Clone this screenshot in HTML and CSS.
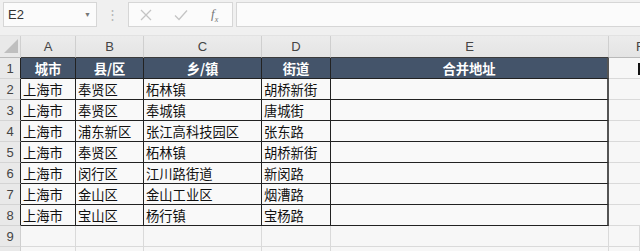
FILE: index.html
```html
<!DOCTYPE html>
<html lang="zh">
<head>
<meta charset="utf-8">
<link rel="stylesheet" href="styles.css">
</head>
<body>
<div class="app">
  <div class="toolbar">
    <div class="namebox"><span class="ref">E2</span><span class="drop">▼</span></div>
    <div class="dots">⋮</div>
    <div class="btns">
      <svg class="ico x" width="12" height="12" viewBox="0 0 12 12"><path d="M1 1L11 11M11 1L1 11" stroke="#c4c4c4" stroke-width="1.3" fill="none"/></svg>
      <svg class="ico ok" width="14" height="12" viewBox="0 0 14 12"><path d="M1 6.5L5 10.5L13 1.5" stroke="#c4c4c4" stroke-width="1.3" fill="none"/></svg>
      <span class="fx">f<sub>x</sub></span>
    </div>
    <div class="formula"></div>
  </div>
  <div class="grid">
    <div class="c corner"><svg width="14" height="14" viewBox="0 0 14 14"><path d="M14 0L14 14L0 14Z" fill="#bfbfbf"/></svg></div>
    <div class="c colh tb">A</div>
    <div class="c colh tb">B</div>
    <div class="c colh tb">C</div>
    <div class="c colh tb">D</div>
    <div class="c colh tb">E</div>
    <div class="c colh f"><span class="flabel">F</span></div>

    <div class="c rowh in">1</div>
    <div class="c hd">城市</div>
    <div class="c hd">县/区</div>
    <div class="c hd">乡/镇</div>
    <div class="c hd">街道</div>
    <div class="c hd last">合并地址</div>
    <div class="c fc"><span class="cursor"></span></div>

    <div class="c rowh in">2</div>
    <div class="c d">上海市</div><div class="c d">奉贤区</div><div class="c d">柘林镇</div><div class="c d">胡桥新街</div><div class="c d last"></div><div class="c fc"></div>

    <div class="c rowh in">3</div>
    <div class="c d">上海市</div><div class="c d">奉贤区</div><div class="c d">奉城镇</div><div class="c d">唐城街</div><div class="c d last"></div><div class="c fc"></div>

    <div class="c rowh in">4</div>
    <div class="c d">上海市</div><div class="c d">浦东新区</div><div class="c d">张江高科技园区</div><div class="c d">张东路</div><div class="c d last"></div><div class="c fc"></div>

    <div class="c rowh in">5</div>
    <div class="c d">上海市</div><div class="c d">奉贤区</div><div class="c d">柘林镇</div><div class="c d">胡桥新街</div><div class="c d last"></div><div class="c fc"></div>

    <div class="c rowh in">6</div>
    <div class="c d">上海市</div><div class="c d">闵行区</div><div class="c d">江川路街道</div><div class="c d">新闵路</div><div class="c d last"></div><div class="c fc"></div>

    <div class="c rowh in">7</div>
    <div class="c d">上海市</div><div class="c d">金山区</div><div class="c d">金山工业区</div><div class="c d">烟漕路</div><div class="c d last"></div><div class="c fc"></div>

    <div class="c rowh in">8</div>
    <div class="c d">上海市</div><div class="c d">宝山区</div><div class="c d">杨行镇</div><div class="c d">宝杨路</div><div class="c d last"></div><div class="c fc"></div>

    <div class="c rowh">9</div>
    <div class="c e"></div><div class="c e"></div><div class="c e"></div><div class="c e"></div><div class="c e"></div><div class="c e"></div>

    <div class="c rowh"></div>
    <div class="c e"></div><div class="c e"></div><div class="c e"></div><div class="c e"></div><div class="c e"></div><div class="c e"></div>
  </div>
</div>
</body>
</html>
```

FILE: styles.css
```css
* { box-sizing: border-box; }
html, body { margin: 0; padding: 0; }
body {
  width: 640px;
  height: 251px;
  overflow: hidden;
  background: #f7f7f7;
  font-family: "Liberation Sans", "Noto Sans CJK SC", sans-serif;
}
.app { width: 640px; }

.toolbar {
  height: 36px;
  background: #f0f0f0;
  display: flex;
  align-items: flex-start;
  padding: 2px 0 0 3px;
  border-bottom: 1px solid #e2e2e2;
}
.namebox {
  width: 94px;
  height: 25px;
  background: #fbfbfb;
  border: 1px solid #d6d6d6;
  display: flex;
  align-items: center;
  justify-content: space-between;
  padding: 0 5px 0 4px;
}
.ref { font-size: 13px; color: #333; }
.drop { font-size: 7px; color: #777; }
.dots {
  width: 31px;
  text-align: center;
  color: #b5b5b5;
  font-size: 13px;
  line-height: 25px;
}
.btns {
  width: 105px;
  height: 25px;
  background: #fbfbfb;
  border: 1px solid #d6d6d6;
  display: flex;
  align-items: center;
  padding-left: 11px;
}
.ico.x { margin-right: 22px; }
.ico.ok { margin-right: 23px; }
.fx {
  font-family: "Liberation Serif", serif;
  font-style: italic;
  font-size: 13px;
  color: #777;
}
.fx sub { font-size: 8px; }
.formula {
  flex: 1;
  height: 25px;
  margin-left: 3px;
  background: #fbfbfb;
  border: 1px solid #d6d6d6;
  border-right: none;
}

.grid {
  display: grid;
  grid-template-columns: 21px 55px 68px 118px 69px 278px 31px;
  grid-template-rows: 22px repeat(9, 21px) 21px;
}
.c {
  border-right: 1px solid #dadada;
  border-bottom: 1px solid #dadada;
  font-size: 13.3px;
  white-space: nowrap;
  overflow: hidden;
  display: flex;
  align-items: center;
}
.corner {
  background: #e9e9e9;
  border-bottom: 1px solid #b9b9b9;
  border-right: 1px solid #d0d0d0;
  padding: 3px 0 0 4px;
  align-items: flex-start;
}
.colh {
  background: linear-gradient(#ececec, #e4e4e4);
  color: #444;
  justify-content: center;
  font-size: 13px;
  border-right: 1px solid #cfcfcf;
  border-bottom: 1px solid #b9b9b9;
}
.colh.tb { border-bottom: 1px solid #3b3b3b; }
.colh.f { justify-content: flex-start; padding-left: 27px; border-right: none; }
.flabel { display: inline-block; }
.rowh {
  background: #e9e9e9;
  color: #444;
  justify-content: center;
  font-size: 13px;
  border-right: 1px solid #cfcfcf;
  border-bottom: 1px solid #d4d4d4;
}
.rowh.in { border-right: 1px solid #222; }
.hd {
  background: #44546a;
  color: #fff;
  font-weight: bold;
  justify-content: center;
  border-right: 1px solid #222;
  border-bottom: 1px solid #222;
  font-family: "Noto Sans CJK SC", sans-serif;
}
.d {
  background: #f9f9f9;
  color: #111;
  padding-left: 2px;
  border-right: 1px solid #222;
  border-bottom: 1px solid #222;
  font-family: "Noto Sans CJK SC", sans-serif;
}
.last { border-right: 2px solid #555; }
.fc { background: #f7f7f7; position: relative; border-right: none; }
.e { background: #f7f7f7; }
.cursor {
  position: absolute;
  right: 0;
  top: 5px;
  width: 2px;
  height: 12px;
  background: #111;
}
```
